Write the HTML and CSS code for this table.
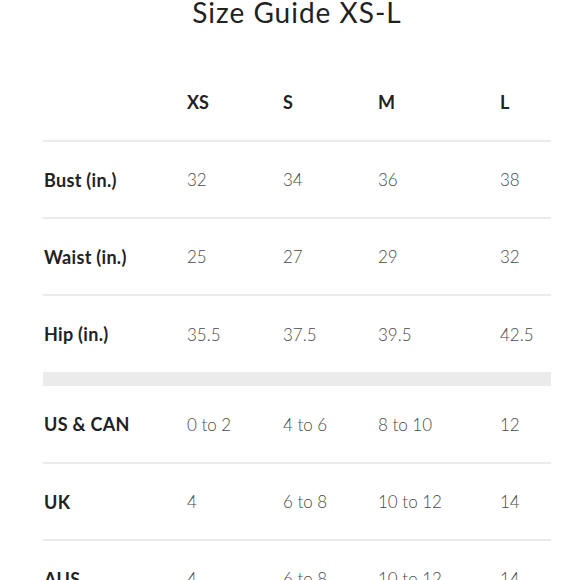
FILE: index.html
```html
<!DOCTYPE html>
<html>
<head>
<meta charset="utf-8">
<link rel="stylesheet" href="styles.css">
</head>
<body>
<div class="guide">
  <h1 class="title">Size Guide XS-L</h1>
  <div class="row head">
    <div></div><div>XS</div><div>S</div><div>M</div><div>L</div>
  </div>
  <div class="row">
    <div class="label">Bust (in.)</div><div>32</div><div>34</div><div>36</div><div>38</div>
  </div>
  <div class="row">
    <div class="label">Waist (in.)</div><div>25</div><div>27</div><div>29</div><div>32</div>
  </div>
  <div class="row last">
    <div class="label">Hip (in.)</div><div>35.5</div><div>37.5</div><div>39.5</div><div>42.5</div>
  </div>
  <div class="band"></div>
  <div class="row first">
    <div class="label">US &amp; CAN</div><div>0 to 2</div><div>4 to 6</div><div>8 to 10</div><div>12</div>
  </div>
  <div class="row">
    <div class="label">UK</div><div>4</div><div>6 to 8</div><div>10 to 12</div><div>14</div>
  </div>
  <div class="row">
    <div class="label">AUS</div><div>4</div><div>6 to 8</div><div>10 to 12</div><div>14</div>
  </div>
</div>
</body>
</html>
```

FILE: styles.css
```css
html, body {
  margin: 0;
  padding: 0;
  background: #ffffff;
}
body {
  font-family: Lato, "Open Sans", sans-serif;
  color: #222222;
  height: 580px;
  overflow: hidden;
}
.guide {
  margin-left: 43px;
  width: 508px;
}
.title {
  margin: 0 0 39px 0;
  font-size: 28px;
  line-height: 25px;
  font-weight: 400;
  letter-spacing: 1px;
  text-align: center;
  color: #222222;
}
.row {
  display: grid;
  grid-template-columns: 144px 96px 95px 122px 51px;
  align-items: center;
  height: 75px;
  border-bottom: 2px solid #ebebeb;
  font-size: 17px;
  font-weight: 300;
  color: #4a4a4a;
}
.row.head {
  height: 76px;
  font-size: 18px;
  font-weight: 700;
  color: #222222;
}
.row.last {
  height: 76px;
  border-bottom: none;
}
.row.first {
  height: 76px;
}
.label {
  padding-left: 1px;
  font-size: 18px;
  font-weight: 700;
  letter-spacing: 0.3px;
  color: #222222;
}
.band {
  height: 14px;
  background: #ebebeb;
}
```
